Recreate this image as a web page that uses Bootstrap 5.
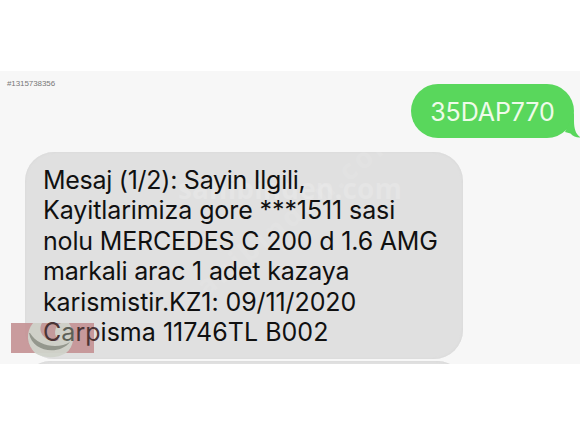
<!DOCTYPE html>
<html lang="tr">

<head>
  <meta charset="utf-8">
  <title>Mesaj</title>
  <link href="https://cdn.jsdelivr.net/npm/bootstrap@5.3.2/dist/css/bootstrap.min.css" rel="stylesheet">
  <script src="https://cdn.jsdelivr.net/npm/bootstrap@5.3.2/dist/js/bootstrap.bundle.min.js"></script>
  <style>
    body {
      font-family: Inter, "Liberation Sans", sans-serif;
      height: 435px;
      padding-top: 71px;
      background: #fff;
    }

    .chat {
      height: 293px;
      background: #f7f7f7;
    }

    .listing-no {
      height: 13px;
      padding: 8px 0 0 7px;
      font: 8px/10px "Liberation Sans", sans-serif;
      letter-spacing: -.08px;
      color: #777;
    }

    .sent-row {
      height: 68px;
    }

    .sent {
      width: 163px;
      height: 54px;
      margin-right: 6px;
      padding-top: 3px;
      border-radius: 27px;
      background: #59d75c;
      color: #effbea;
      font-size: 25px;
      letter-spacing: -.1px;
    }

    .tail {
      right: -7px;
      bottom: 0;
    }

    .received {
      width: 438px;
      height: 207px;
      margin-left: 25px;
      border-radius: 29px;
      background: #e0e0e0;
      box-shadow: inset 0 0 3px #d6d6d6;
    }

    /* the text stays above the watermark and the stamp */
    .received-text {
      z-index: 2;
      padding: 12.5px 0 0 18px;
      font-size: 25px;
      line-height: 30.6px;
      color: #101010;
      letter-spacing: -.18px;
    }

    .line-greeting {
      letter-spacing: -.27px;
    }

    .line-chassis,
    .line-date {
      letter-spacing: -.1px;
    }

    .line-damage {
      letter-spacing: .03px;
    }

    .on-red {
      color: #4b3435;
    }

    .on-light {
      color: #5c6057;
    }

    .next {
      height: 50px;
      margin-top: 2px;
    }

    .watermark,
    .stamp {
      left: 0;
      top: 0;
      pointer-events: none;
    }

    .watermark text {
      font: bold 28px "Open Sans", sans-serif;
      fill: #fff;
    }
  </style>
</head>

<body>
  <main class="chat position-relative overflow-hidden">
    <div class="listing-no">#1315738356</div>
    <div class="sent-row d-flex justify-content-end align-items-start">
      <div class="sent position-relative d-flex align-items-center justify-content-center">
        35DAP770
        <svg class="tail position-absolute" width="24" height="26" viewBox="0 0 24 26">
          <path d="M17 0V9C17 17 19 23 24 25.5C20 26 16 24.5 13.5 21.5L8 20Z" fill="#59d75c" />
        </svg>
      </div>
    </div>
    <div class="received">
      <div class="received-text position-relative text-nowrap">
        <div class="line-greeting">Mesaj (1/2): Sayin Ilgili,</div>
        <div class="line-chassis">Kayitlarimiza gore ***1511 sasi</div>
        <div>nolu MERCEDES C 200 d 1.6 AMG</div>
        <div>markali arac 1 adet kazaya</div>
        <div class="line-date">karismistir.KZ1: 09/11/2020</div>
        <div class="line-damage"><span class="on-red">C</span><span class="on-light">a</span><span class="on-red">rp</span>isma 11746TL B002</div>
      </div>
    </div>
    <div class="received next"></div>

    <svg class="watermark position-absolute" width="580" height="293" viewBox="0 71 580 293">
      <text x="178" y="199" textLength="224" opacity=".16">sahibinden.com</text>
      <text x="157" y="227" textLength="266" opacity=".09" transform="rotate(-39 290 217)">sahibinden.com</text>
    </svg>

    <svg class="stamp position-absolute" width="580" height="293" viewBox="0 71 580 293">
      <path d="M11 323H94V353H11Z" fill="#c49395" opacity=".92" />
      <path d="M33 323H69C76 334 74 347 66 353C57 359 42 358 35 353C27 345 25 333 33 323Z" fill="#d0d3ca" opacity=".95" />
      <path d="M42 323H61C54 326 53 336 59 340C48 344 36 333 42 323Z" fill="#c39a9b" />
      <path d="M29 333C32 352 59 356 70 342C59 349 38 347 30 333Z" fill="#94978d" />
    </svg>
  </main>
</body>

</html>
